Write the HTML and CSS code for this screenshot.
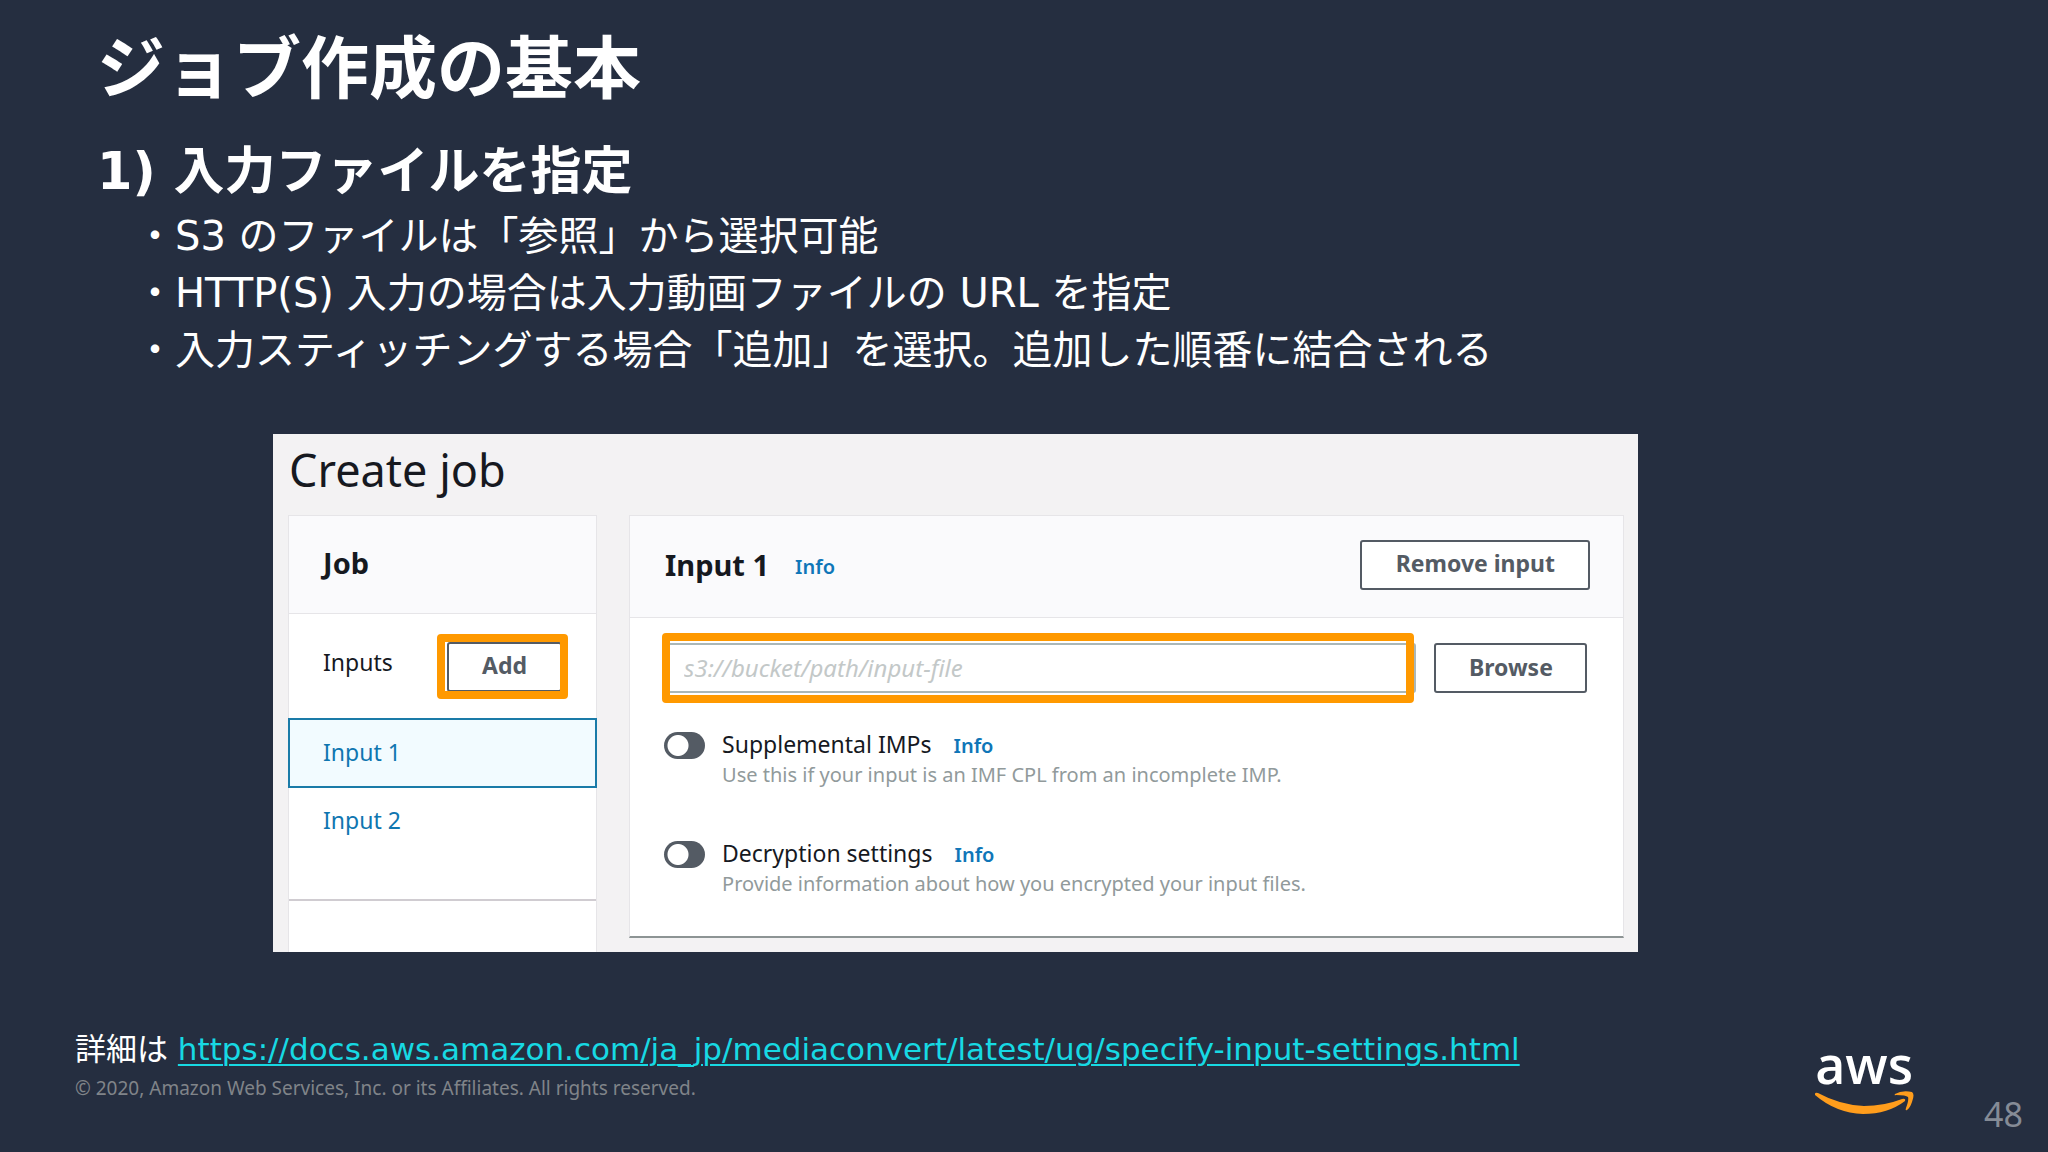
FILE: index.html
```html
<!DOCTYPE html>
<html lang="ja">
<head>
<meta charset="utf-8">
<meta name="viewport" content="width=device-width, initial-scale=1">
<title>ジョブ作成の基本</title>
<link rel="stylesheet" href="styles.css">
</head>
<body>
<main class="slide">
  <header class="slide-head">
    <h1 class="slide-title">ジョブ作成の基本</h1>
    <h2 class="slide-step">1) 入力ファイルを指定</h2>
    <ul class="points">
      <li>・S3 のファイルは「参照」から選択可能</li>
      <li>・HTTP(S) 入力の場合は入力動画ファイルの URL を指定</li>
      <li>・入力スティッチングする場合「追加」を選択。追加した順番に結合される</li>
    </ul>
  </header>

  <div class="stage">
    <section class="console" aria-labelledby="console-title">
      <h3 class="console-title" id="console-title">Create job</h3>
      <div class="console-body">
        <nav class="card job-card" aria-label="Job">
          <div class="card-head job-head"><h4 class="card-title">Job</h4></div>
          <div class="inputs-row">
            <span class="inputs-label">Inputs</span>
            <span class="highlight highlight-add"><button type="button" class="btn btn-add">Add</button></span>
          </div>
          <a class="job-link job-link-current" href="#input-1" aria-current="true">Input 1</a>
          <a class="job-link" href="#input-2">Input 2</a>
          <div class="job-rest"></div>
        </nav>

        <section class="card input-card" id="input-1">
          <div class="card-head input-head">
            <h4 class="card-title">Input 1</h4>
            <a class="info" href="#info-input">Info</a>
            <button type="button" class="btn btn-remove">Remove input</button>
          </div>
          <div class="input-body">
            <div class="file-row">
              <span class="highlight highlight-file">
                <input class="file-field" type="text" placeholder="s3://bucket/path/input-file" aria-label="Input file">
              </span>
              <button type="button" class="btn btn-browse">Browse</button>
            </div>
            <div class="option">
              <input class="toggle" type="checkbox" role="switch" id="imps">
              <div>
                <div class="option-head"><label for="imps">Supplemental IMPs</label><a class="info" href="#info-imps">Info</a></div>
                <p class="hint">Use this if your input is an IMF CPL from an incomplete IMP.</p>
              </div>
            </div>
            <div class="option">
              <input class="toggle" type="checkbox" role="switch" id="decrypt">
              <div>
                <div class="option-head"><label for="decrypt">Decryption settings</label><a class="info" href="#info-decrypt">Info</a></div>
                <p class="hint">Provide information about how you encrypted your input files.</p>
              </div>
            </div>
          </div>
        </section>
      </div>
    </section>
  </div>

  <footer class="slide-foot">
    <div class="foot-text">
      <p class="more">詳細は <a href="https://docs.aws.amazon.com/ja_jp/mediaconvert/latest/ug/specify-input-settings.html">https://docs.aws.amazon.com/ja_jp/mediaconvert/latest/ug/specify-input-settings.html</a></p>
      <p class="copyright">© 2020, Amazon Web Services, Inc. or its Affiliates. All rights reserved.</p>
    </div>
    <div class="logo">
      <span class="logo-word">aws</span>
      <svg class="logo-smile" viewBox="0 0 100 24" aria-hidden="true">
        <path d="M1 3Q1 1 4 2Q26 14 50 15Q70 15 88 8Q92 7 91 10Q74 23 49 23Q22 22 1 4Z"/>
        <path d="M82 4Q80 5 81 3Q88 -1 98 1Q101 3 98 11Q96 17 93 19Q91 20 92 17Q95 9 94 6Q92 4 82 4Z"/>
      </svg>
    </div>
    <span class="page-number">48</span>
  </footer>
</main>
</body>
</html>
```
FILE: styles.css
```css
* { box-sizing: border-box; }

body {
  margin: 0;
  background: #252e40;
  color: #fff;
  font-family: "DejaVu Sans", "Noto Sans CJK JP", sans-serif;
}

h1, h2, h3, h4, p, ul { margin: 0; padding: 0; }

.slide {
  min-height: 100vh;
  display: flex;
  flex-direction: column;
}

.slide-head { padding: 30px 97px 0; }
.slide-title { font-size: 68px; line-height: 80px; font-weight: 700; }
.slide-step { margin-top: 27px; font-size: 51px; line-height: 70px; font-weight: 700; }
.points { padding: 1px 38px 0; list-style: none; font-size: 40px; line-height: 57px; }

.stage {
  display: grid;
  grid-template-columns: 2fr 10fr 3fr;
  margin-top: 55px;
}

/* console */
.console {
  grid-column: 2;
  padding: 0 14px 0 15px;
  background: #f3f2f3;
  color: #16191f;
  font-family: "Noto Sans", sans-serif;
}
.console-title { padding: 6px 1px 15px; font-size: 45px; line-height: 60px; font-weight: 400; }
.console-body {
  display: grid;
  grid-template-columns: 309px 1fr;
  gap: 32px;
  align-items: start;
}
.card { background: #fff; border: 1px solid #e6e5e8; }
.card-head {
  display: flex;
  align-items: center;
  background: #fafafc;
  border-bottom: 1px solid #e6e5e8;
}
.card-title { font-size: 29px; line-height: 40px; font-weight: 700; }
.info { color: #0f76b8; font-size: 20px; font-weight: 600; text-decoration: none; }

.btn {
  height: 50px;
  padding: 0 0 3px;
  border: 2px solid #545b64;
  border-radius: 3px;
  background: #fff;
  color: #545b64;
  font: 700 23px "Noto Sans", sans-serif;
}

.job-card { border-bottom: 0; }
.job-head { height: 98px; padding: 0 34px 4px; }
.inputs-row {
  display: flex;
  align-items: center;
  justify-content: space-between;
  height: 105px;
  padding: 0 34px;
}
.inputs-label { padding-bottom: 10px; font-size: 23px; }
.btn-add { width: 115px; }
.job-link {
  display: flex;
  align-items: center;
  height: 68px;
  padding: 0 34px 2px;
  color: #0f76b0;
  font-size: 23px;
  text-decoration: none;
}
.job-link-current { background: #f2fbff; outline: 2px solid #1a7ba8; outline-offset: -1px; }
.job-rest { height: 97px; padding-top: 44px; }
.job-rest::before { content: ""; display: block; border-top: 2px solid #d0ccd1; }

.input-card { border-bottom: 2px solid #8d9494; }
.input-head { height: 102px; padding: 0 33px 4px 35px; }
.input-head .info { margin-left: 26px; padding-top: 4px; }
.btn-remove { width: 230px; margin-left: auto; }
.input-body { padding: 25px 36px 39px 34px; }
.file-row { display: flex; gap: 18px; margin-bottom: 35px; }
.file-field {
  width: 100%;
  height: 50px;
  padding: 0 18px 2px;
  border: 2px solid #aab7b8;
  border-radius: 3px;
  background: #fff;
  font: italic 24px "Noto Sans", sans-serif;
}
.file-field::placeholder { color: #c3c8c8; opacity: 1; }
.btn-browse { width: 153px; }

.option { display: flex; gap: 17px; }
.option + .option { margin-top: 49px; }
.option-head { display: flex; align-items: baseline; gap: 22px; font-size: 23px; line-height: 32px; }
.hint { color: #919a9b; font-size: 20px; line-height: 26px; }
.toggle {
  appearance: none;
  width: 41px;
  height: 27px;
  margin: 4px 0 0;
  border-radius: 14px;
  background: radial-gradient(circle at 14px 50%, #fff 10px, #545b64 11px);
}

/* call-out frames drawn over the controls */
.highlight { position: relative; display: flex; }
.highlight::after {
  content: "";
  position: absolute;
  border: 8px solid #ff9900;
  border-radius: 4px;
  pointer-events: none;
}
.highlight-add::after { inset: -8px -6px -7px -10px; }
.highlight-file { flex: 1; }
.highlight-file::after { inset: -10px 2px -10px -2px; }

/* footer */
.slide-foot {
  display: flex;
  align-items: flex-end;
  margin-top: auto;
  padding: 0 25px 15px 75px;
}
.foot-text { margin-right: auto; padding-bottom: 33px; }
.more { font-size: 31px; line-height: 46px; }
.more a { color: #17d9e3; text-decoration-thickness: 2px; text-underline-offset: 4px; }
.copyright { color: #808489; font: 19px/32px "Noto Sans", sans-serif; }
.logo {
  display: flex;
  flex-direction: column;
  align-items: center;
  width: 100px;
  margin-right: 70px;
  padding-bottom: 22px;
}
.logo-word { font: 600 52px/54px "Open Sans", sans-serif; }
.logo-smile { width: 100px; height: 24px; fill: #ff9d1c; }
.page-number { color: #858b96; font: 34px/46px "Noto Sans", sans-serif; }
```
